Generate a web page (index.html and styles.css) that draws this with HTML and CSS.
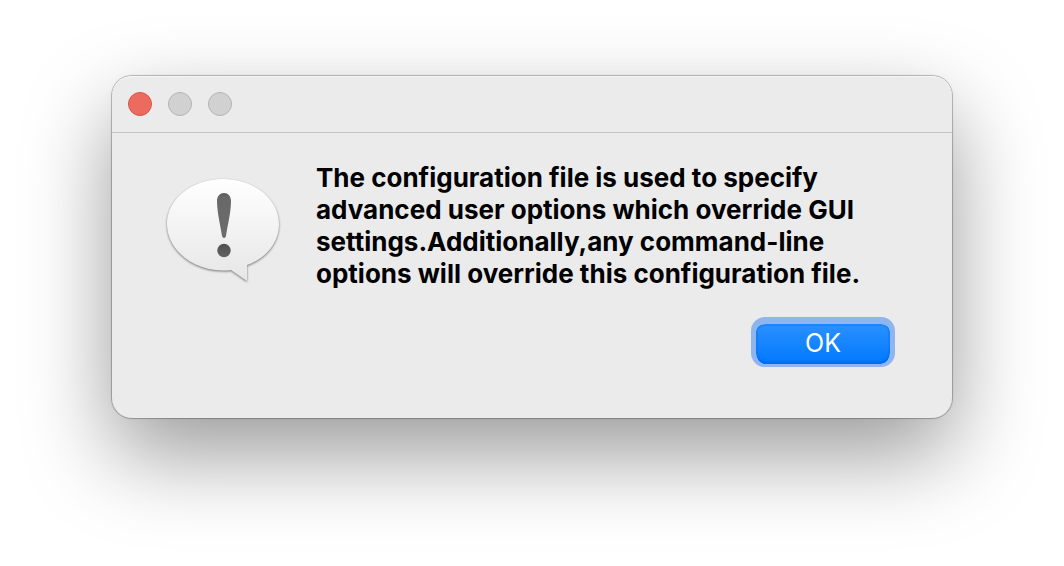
FILE: index.html
```html
<!DOCTYPE html>
<html lang="en">
<head>
<meta charset="utf-8">
<meta name="viewport" content="width=device-width, initial-scale=1">
<title>Configuration file</title>
<link rel="stylesheet" href="styles.css">
</head>
<body>
<main class="dialog" role="alertdialog" aria-describedby="message">
  <header class="titlebar">
    <button class="light light-close" type="button" aria-label="Close"></button>
    <button class="light" type="button" aria-label="Minimize" disabled></button>
    <button class="light" type="button" aria-label="Zoom" disabled></button>
  </header>
  <div class="content">
    <svg class="icon" viewBox="0 0 124 112" aria-hidden="true">
      <defs>
        <linearGradient id="bubble" x1="0" y1="0" x2="0" y2="1">
          <stop offset="0" stop-color="#ffffff"/>
          <stop offset="1" stop-color="#e6e6e6"/>
        </linearGradient>
        <linearGradient id="mark" x1="0" y1="0" x2="0" y2="1">
          <stop offset="0" stop-color="#5c5c5c"/>
          <stop offset="0.1" stop-color="#686868"/>
          <stop offset="1" stop-color="#6c6c6c"/>
        </linearGradient>
        <linearGradient id="dot" x1="0" y1="0" x2="0" y2="1">
          <stop offset="0" stop-color="#505050"/>
          <stop offset="1" stop-color="#646464"/>
        </linearGradient>
      </defs>
      <path class="bubble" fill="url(#bubble)" d="M62 5C93 5 118 25 118 50C118 68 106 84 86 91V107L70 96C67 96.500 65 96.500 62 96.500C31 96.500 6 75 6 50C6 25 31 5 62 5Z"/>
      <path fill="url(#mark)" d="M63 19C67 19 70 22 70 27C70 39 66 54 65 62Q64.500 64 63 64Q61.500 64 61 62C60 54 56 39 56 27C56 22 59 19 63 19Z"/>
      <circle fill="url(#dot)" cx="63" cy="76.500" r="6.700"/>
    </svg>
    <div class="body">
      <p class="message" id="message">The configuration file is used to specify<br>advanced user options which override GUI<br>settings.Additionally,any command-line<br>options will override this configuration file.</p>
      <button class="ok" type="button">OK</button>
    </div>
  </div>
</main>
</body>
</html>
```
FILE: styles.css
```css
* {
  box-sizing: border-box;
}

body {
  margin: 0;
  padding: 76px 112px 148px;
  background: #ffffff;
  font-family: Inter, "Liberation Sans", sans-serif;
}

.dialog {
  border-radius: 20px;
  background: #ebebeb;
  box-shadow:
    inset 0 1px 0 #f7f7f7,
    0 0 0 1px rgba(0, 0, 0, 0.2),
    0 0 3px rgba(0, 0, 0, 0.15),
    0 36px 88px rgba(0, 0, 0, 0.4);
}

.titlebar {
  display: flex;
  gap: 16px;
  padding: 16px;
  border-bottom: 1px solid #c4c4c4;
}

.light {
  width: 24px;
  height: 24px;
  padding: 0;
  border: 1px solid #b4b4b4;
  border-radius: 50%;
  background: #d1d1d1;
}

.light-close {
  border-color: #d6564c;
  background: #ed6a5e;
}

.content {
  display: flex;
  align-items: flex-start;
  gap: 31px;
  padding: 29px 57px 51px 49px;
}

.icon {
  flex: none;
  width: 124px;
  height: 112px;
  margin-top: 12px;
  overflow: visible;
}

.bubble {
  filter: drop-shadow(0 1px 1px rgba(0, 0, 0, 0.5));
}

.body {
  display: flex;
  flex: 1;
  flex-direction: column;
  gap: 27px;
}

.message {
  margin: 0;
  color: #000000;
  font-size: 26px;
  font-weight: 700;
  line-height: 32px;
  white-space: nowrap;
}

.ok {
  align-self: flex-end;
  width: 144px;
  height: 50px;
  padding: 0 0 2px;
  border: 5px solid #8fb5ee;
  border-top-width: 7px;
  border-bottom-width: 3px;
  border-radius: 14px;
  background: linear-gradient(#2b90ff, #0079ff) padding-box;
  box-shadow: inset 0 0 0 2px rgba(0, 100, 240, 0.25), inset 0 -3px 1px rgba(0, 105, 250, 0.6);
  color: #ffffff;
  font-family: inherit;
  font-size: 25px;
  line-height: 32px;
}
```
